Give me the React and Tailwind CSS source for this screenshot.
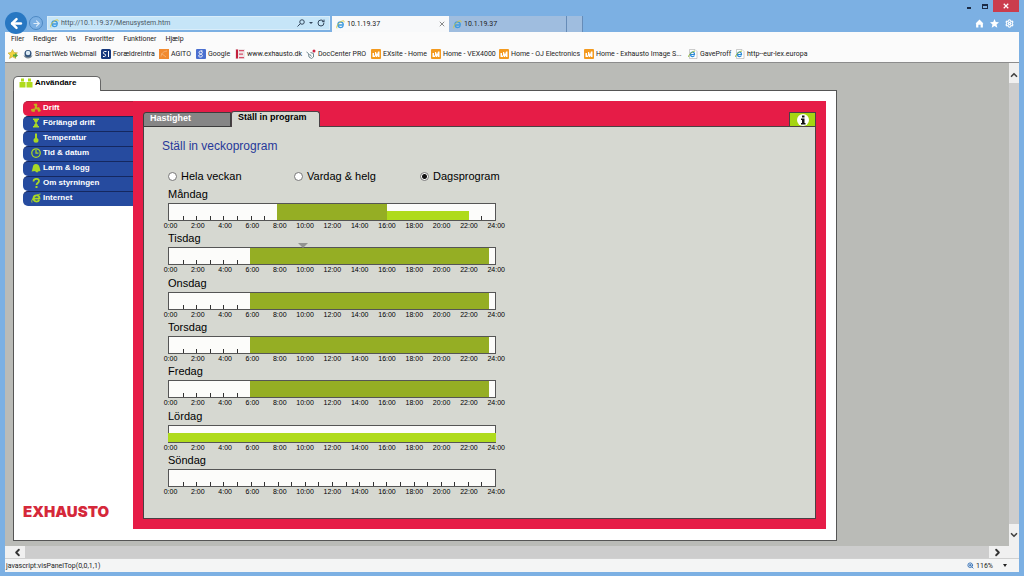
import { useState } from 'react'
import { ArrowLeft, ArrowRight, ChevronDown, ChevronLeft, ChevronRight, ChevronUp, RotateCw, Settings, ZoomIn } from 'lucide-react'

const MENUS = ['Filer', 'Rediger', 'Vis', 'Favoritter', 'Funktioner', 'Hjælp']

const BOOKMARKS = [
  { label: 'SmartWeb Webmail', icon: 'ball', width: 'w-[78px]' },
  { label: 'ForældreIntra', icon: 'si', width: 'w-[58px]' },
  { label: 'AGITO', icon: 'agito', width: 'w-[37px]' },
  { label: 'Google', icon: 'google', width: 'w-[39px]' },
  { label: 'www.exhausto.dk', icon: 'exhausto', width: 'w-[71px]' },
  { label: 'DocCenter PRO', icon: 'doc', width: 'w-[65px]' },
  { label: 'EXsite - Home', icon: 'site', width: 'w-[60px]' },
  { label: 'Home - VEX4000', icon: 'site', width: 'w-[68px]' },
  { label: 'Home - OJ Electronics', icon: 'site', width: 'w-[85px]' },
  { label: 'Home - Exhausto Image S...', icon: 'site', width: 'w-[104px]' },
  { label: 'GaveProff', icon: 'ie', width: 'w-[47px]' },
  { label: 'http--eur-lex.europa', icon: 'ie', width: 'w-[80px]' },
]

const SECTIONS = [
  { label: 'Drift', icon: 'fan' },
  { label: 'Förlängd drift', icon: 'hourglass' },
  { label: 'Temperatur', icon: 'thermo' },
  { label: 'Tid & datum', icon: 'clock' },
  { label: 'Larm & logg', icon: 'bell' },
  { label: 'Om styrningen', icon: 'help' },
  { label: 'Internet', icon: 'globe' },
]

const MODES = ['Hela veckan', 'Vardag & helg', 'Dagsprogram']

const DAYS = [
  { name: 'Måndag', blocks: [{ from: 8, to: 16, level: 'high' }, { from: 16, to: 22, level: 'low' }] },
  { name: 'Tisdag', blocks: [{ from: 6, to: 23.5, level: 'high' }], now: 9.9 },
  { name: 'Onsdag', blocks: [{ from: 6, to: 23.5, level: 'high' }] },
  { name: 'Torsdag', blocks: [{ from: 6, to: 23.5, level: 'high' }] },
  { name: 'Fredag', blocks: [{ from: 6, to: 23.5, level: 'high' }] },
  { name: 'Lördag', blocks: [{ from: 0, to: 24, level: 'low' }] },
  { name: 'Söndag', blocks: [] },
]

const LEVELS = {
  high: 'h-full bg-[#95ae24]',
  low: 'h-[9px] bg-[#afdb1c]',
}

const HOURS = Array.from({ length: 13 }, (_, i) => i * 2)
const pct = hour => `${(hour / 24) * 100}%`

function IeLogo({ className }) {
  return (
    <svg viewBox="0 0 20 20" className={className} aria-hidden="true">
      <path d="M4.6 11h11.6c.2-4-2.4-6.6-6-6.6s-6 2.600-6 6.200 2.600 6.200 6 6.200c2.600 0 4.700-1.300 5.600-3.600" fill="none" stroke="#3f9be0" strokeWidth="3" />
      <path d="M2 18.500C-.5 15 6 5.500 13 2.500c3-1.200 6-1 5 2.500" fill="none" stroke="#d9c93a" strokeWidth="2" />
    </svg>
  )
}

function BookmarkIcon({ name }) {
  if (name === 'ie') {
    return (
      <svg viewBox="0 0 20 20" className="size-[10px] shrink-0" aria-hidden="true">
        <path d="M3 1h11l4 4v14H3z" fill="#fff" stroke="#9a9a9a" />
        <path d="M5 11h8c0-3-1.600-5-4-5s-4 2-4 4.700 1.600 4.600 4 4.600c2 0 3.200-.8 4-2.300" fill="none" stroke="#2d8bd8" strokeWidth="2.400" />
        <path d="M1 16C1 12 7 5 14 4" fill="none" stroke="#8ab52e" strokeWidth="1.800" />
      </svg>
    )
  }
  return (
    <svg viewBox="0 0 20 20" className="size-[10px] shrink-0" aria-hidden="true">
      {name === 'ball' && (
        <>
          <path d="M1 12c3 3 14 3 18 0-1 5-5 7-9 7s-8-3-9-7z" fill="#7b8894" />
          <circle cx="10" cy="9" r="7" fill="#2d4f78" />
          <circle cx="10" cy="8" r="4.500" fill="#dbeaf5" />
        </>
      )}
      {name === 'si' && (
        <>
          <rect width="20" height="20" rx="3" fill="#17387c" />
          <path d="M11 5H7c-3 0-3 5 0 5s3 5 0 5H4M15 4v12" fill="none" stroke="#fff" strokeWidth="2" />
        </>
      )}
      {name === 'agito' && (
        <>
          <rect width="20" height="20" fill="#f18a2f" />
          <path d="M4 15c1-8 6-10 12-11M5 9l9 7" fill="none" stroke="#f7b071" strokeWidth="2" />
        </>
      )}
      {name === 'google' && (
        <>
          <rect width="20" height="20" rx="2" fill="#4a6fd0" />
          <path d="M13 4H9C5 4 5 10 9 10s5-5 1-6M9 10c5 1 5 6 0 6s-5-4 0-5" fill="none" stroke="#fff" strokeWidth="2" />
        </>
      )}
      {name === 'exhausto' && (
        <>
          <rect width="20" height="20" fill="#efe6e8" />
          <path d="M2 1h4v18H2z" fill="#c3203c" />
          <path d="M8 3h10M8 10h8M8 17h10" stroke="#d8506a" strokeWidth="2.500" />
        </>
      )}
      {name === 'doc' && (
        <>
          <path d="M1 6l4 3 1 7 5 3 4-3V9L9 7M7 10l4 5" fill="none" stroke="#71878f" strokeWidth="2" />
          <circle cx="16" cy="4" r="3" fill="#cf2444" />
        </>
      )}
      {name === 'site' && (
        <>
          <rect width="20" height="20" rx="2" fill="#f39a1f" />
          <path d="M3 16V8h3v5h2V6h2l2 5 2-6h3v11h-3v-3l-2 3h-2l-2-3v3z" fill="#fff" />
        </>
      )}
    </svg>
  )
}

function SectionIcon({ name }) {
  return (
    <svg viewBox="0 0 20 20" className="size-[10px] shrink-0 text-[#a9d824]" fill="currentColor" aria-hidden="true">
      {name === 'fan' && (
        <g fill="#c3b41c">
          <path d="M9 9L5 2l6-1 2 3-2 5zM11 10l5-2 4 8-5 2zM9 11l-2 7-6-1-1-5z" />
          <circle cx="10" cy="10" r="3" />
        </g>
      )}
      {name === 'hourglass' && <path d="M4 1h12v3h-2c0 3-2 4-3 6 1 2 3 3 3 6h2v3H4v-3h2c0-3 2-4 3-6-1-2-3-3-3-6H4z" />}
      {name === 'thermo' && <path d="M8 1h4v9c2 1 3 2.500 3 4.500a5 5 0 0 1-10 0C5 12.500 6 11 8 10z" />}
      {name === 'clock' && (
        <g fill="none" stroke="currentColor" strokeWidth="2.500">
          <circle cx="10" cy="10" r="8.500" />
          <path d="M10 4v6h5" />
        </g>
      )}
      {name === 'bell' && <path d="M5 4c4-4 11-2 12 4l2 8-5 1-1 2-4-1v-2l-8 1c2-3 2-9 4-13z" />}
      {name === 'help' && (
        <>
          <path d="M5 7c0-7 11-7 11-1 0 4-5 4-5 8" fill="none" stroke="currentColor" strokeWidth="3.500" />
          <rect x="9" y="16" width="4" height="4" />
        </>
      )}
      {name === 'globe' && (
        <>
          <path d="M5 11h12c0-4-2-6.500-6-6.500s-6 2.500-6 6 2.500 6.500 6 6.500c3 0 4.500-1 5.500-3" fill="none" stroke="currentColor" strokeWidth="3.500" />
          <path d="M2 19C-1 14 9 3 19 2" fill="none" stroke="currentColor" strokeWidth="2" />
        </>
      )}
    </svg>
  )
}

function WindowBar() {
  return (
    <div className="flex h-[14px] shrink-0 justify-end text-[#1c2b45]">
      <button type="button" aria-label="Minimer" className="flex h-3 w-4 items-center justify-center">
        <span className="mt-1 h-[2px] w-1 bg-current" />
      </button>
      <button type="button" aria-label="Maksimer" className="flex h-3 w-4 items-center justify-center">
        <span className="h-[5px] w-[6px] border border-t-2 border-current" />
      </button>
      <button type="button" aria-label="Luk" className="flex h-3 w-[26px] items-center justify-center bg-[#cb3d4d]">
        <svg viewBox="0 0 8 8" className="size-[6px]" stroke="#fff" strokeWidth="1.600"><path d="M1 1l6 6M7 1L1 7" /></svg>
      </button>
    </div>
  )
}

function NavBar() {
  return (
    <div className="flex h-[18px] shrink-0">
      <button type="button" aria-label="Tilbage" className="relative z-10 -mt-[2px] flex size-[22px] shrink-0 items-center justify-center rounded-full bg-[#2877c2] text-white">
        <ArrowLeft size={15} strokeWidth={4} />
      </button>
      <button type="button" aria-label="Frem" className="mt-[2px] ml-[2px] flex size-[14px] shrink-0 items-center justify-center rounded-full border border-[#4d89c4] text-[#dcecfa]">
        <ArrowRight size={9} strokeWidth={3} />
      </button>
      <div className="mt-[2px] ml-1 flex h-[14px] w-[283px] items-center border border-[#d9edfa] bg-[#c6e5f8] pr-1 pl-[2px] text-[#34475c]">
        <IeLogo className="size-[9px] shrink-0" />
        <input
          aria-label="Adresse"
          defaultValue="http://10.1.19.37/Menusystem.htm"
          className="ml-[2px] min-w-0 flex-1 bg-transparent text-[7px] text-[#4a5763] outline-none"
        />
        <svg viewBox="0 0 16 16" className="size-2" fill="none" stroke="currentColor" strokeWidth="2" aria-hidden="true">
          <circle cx="10" cy="6" r="4.500" />
          <path d="M7 9l-6 6" />
        </svg>
        <span className="mx-1 border-x-2 border-t-2 border-x-transparent border-t-current" />
        <RotateCw size={8} strokeWidth={3} />
      </div>
      <div className="ml-[2px] flex pt-[2px]">
        <button type="button" className="flex w-[117px] items-center bg-[#f8f9fa] px-1 text-[7px]">
          <IeLogo className="size-[9px]" />
          <span className="ml-[2px] flex-1 text-left">10.1.19.37</span>
          <svg viewBox="0 0 8 8" className="size-[6px]" stroke="#666" strokeWidth="1"><path d="M1 1l6 6M7 1L1 7" /></svg>
        </button>
        <button type="button" className="flex w-[118px] items-center border-r border-[#668cb8] bg-[#9fbddf] px-1 text-[7px]">
          <IeLogo className="size-[9px]" />
          <span className="ml-[2px]">10.1.19.37</span>
        </button>
        <button type="button" aria-label="Ny fane" className="w-4 border-r border-[#668cb8] bg-[#9fbddf]" />
      </div>
      <div className="mr-[5px] ml-auto flex items-center gap-[6px] text-white">
        <svg viewBox="0 0 16 16" className="size-[9px]" fill="currentColor"><path d="M8 1l7 7h-1v7h-4v-5H6v5H2V8H1z" /></svg>
        <svg viewBox="0 0 16 16" className="size-[9px]" fill="currentColor"><path d="M8 0l2.300 5.500 5.700.4-4.400 3.800L13 15.500 8 12.300 3 15.500l1.400-5.800L0 5.900l5.700-.4z" /></svg>
        <Settings size={9} strokeWidth={3} />
      </div>
    </div>
  )
}

function BookmarkBar() {
  return (
    <div className="h-[31px] shrink-0 border-b border-[#8c8c8c] bg-[#fbfbfb]">
      <div className="flex h-[14px] items-center gap-[9px] pl-[6px]">
        {MENUS.map(menu => <button key={menu} type="button">{menu}</button>)}
      </div>
      <nav className="flex h-4 items-center pl-[3px]">
        <svg viewBox="0 0 20 20" className="mr-[5px] size-[10px] shrink-0" aria-hidden="true">
          <path d="M9 1l3 6 7 .5-5 5 1.500 6.500L9 15.500 3 19l1.500-6.500L0 8l6-1z" fill="#f2d440" stroke="#b99a21" />
          <path d="M10 11h4V8l6 5-6 5v-3h-4z" fill="#5ba83a" />
        </svg>
        {BOOKMARKS.map(({ label, icon, width }) => (
          <a key={label} href="#" className={`flex shrink-0 items-center gap-[2px] whitespace-nowrap ${width}`}>
            <BookmarkIcon name={icon} />
            {label}
          </a>
        ))}
      </nav>
    </div>
  )
}

function DayRow({ name, blocks, now }) {
  return (
    <div>
      <h3 className="h-[17px] text-[11px] leading-[16px]">{name}</h3>
      <div className="relative h-[18px] border border-[#555] bg-[#fcfcfa]">
        {HOURS.slice(0, 12).map(hour => (
          <span key={hour}>
            {hour > 0 && <i className="absolute bottom-0 h-1 w-px bg-[#333]" style={{ left: pct(hour) }} />}
            <i className="absolute bottom-0 h-1 w-px bg-[#333]" style={{ left: pct(hour + 1) }} />
          </span>
        ))}
        {/* Programmed ventilation periods */}
        <div className="absolute inset-y-0 -inset-x-px">
          {blocks.map(block => (
            <div
              key={block.from}
              className={`absolute bottom-0 ${LEVELS[block.level]}`}
              style={{ left: pct(block.from), width: pct(block.to - block.from) }}
            />
          ))}
        </div>
        {now && (
          <span
            className="absolute bottom-full -ml-[5px] border-x-[5px] border-t-[5px] border-x-transparent border-t-[#929390]"
            style={{ left: pct(now) }}
          />
        )}
      </div>
      <div className="-mr-[9px] -ml-[18px] grid h-[9px] grid-cols-13 text-right text-[7px] leading-[9px]">
        {HOURS.map(hour => <span key={hour}>{hour}:00</span>)}
      </div>
    </div>
  )
}

function WeekProgram() {
  const [mode, setMode] = useState('Dagsprogram')

  return (
    <div className="flex flex-1 flex-col border border-[#4a4044] bg-[#d6d8d1] pt-[11px] pb-[22px] pl-[18px]">
      <h2 className="text-[12px] leading-4 text-[#27399a]">Ställ in veckoprogram</h2>
      <div className="mt-[14px] ml-[6px] flex h-4">
        {MODES.map(item => (
          <label key={item} className="flex w-[126px] items-center gap-1 text-[11px] leading-4 whitespace-nowrap">
            <input
              type="radio"
              name="mode"
              checked={mode === item}
              onChange={() => setMode(item)}
              className="size-[9px] appearance-none rounded-full border border-[#777] bg-white checked:bg-[radial-gradient(circle,#111_2px,#fff_3px)]"
            />
            {item}
          </label>
        ))}
      </div>
      <div className="mt-[2px] ml-[6px] flex w-[328px] flex-1 flex-col justify-between">
        {DAYS.map(day => <DayRow key={day.name} {...day} />)}
      </div>
    </div>
  )
}

function ControlPanel() {
  const [section, setSection] = useState('Drift')

  return (
    <main className="flex min-w-0 flex-1 flex-col bg-[#babbb7] pt-[13px] pr-2 pb-[5px] pl-2 font-['Liberation_Sans',Arial,sans-serif] text-black">
      <button type="button" className="relative z-10 -mb-px flex h-[15px] w-[88px] items-center gap-[2px] rounded-t-[5px] border border-b-0 border-[#666] bg-white pb-[3px] pl-[5px] text-[8px] font-bold">
        <svg viewBox="0 0 28 20" className="h-[10px] w-[14px]" fill="#afdb1c" aria-hidden="true">
          <path d="M4 1h6v6H4zM1 8h12v11H1zM18 1h6v6h-6zM15 8h12v11H15z" />
        </svg>
        Användare
      </button>
      <div className="flex w-full max-w-[824px] flex-1 border border-[#555] bg-white pt-[10px] pr-[10px] pb-[11px] pl-[9px]">
        <aside className="flex w-[110px] shrink-0 flex-col justify-between">
          <nav>
            {SECTIONS.map(({ label, icon }) => (
              <button
                key={label}
                type="button"
                onClick={() => setSection(label)}
                className={`flex h-[15px] w-full items-center gap-[2px] rounded-l-[5px] border-t pb-[3px] pl-[8px] text-[8px] font-bold text-white ${
                  section === label ? 'border-[#b31c3c] bg-[#e61c47]' : 'border-[#15285f] bg-[#264b9f]'
                }`}
              >
                <SectionIcon name={icon} />
                {label}
              </button>
            ))}
          </nav>
          <p className="pb-2 font-[Inter,sans-serif] text-[15px] leading-[18px] font-black text-[#d5283a]">EXHAUSTO</p>
        </aside>
        <section className="flex min-w-0 flex-1 flex-col bg-[#e61c47] pt-[10px] pr-[10px] pb-[10px] pl-[10px]">
          <div className="relative -mb-px flex h-4 shrink-0 items-end text-[9px] leading-[11px] font-bold">
            <button type="button" className="h-[15px] w-[88px] rounded-tl-[3px] border border-[#3d3d3d] bg-[#868686] pb-[3px] pl-[6px] text-left leading-[11px] text-white">Hastighet</button>
            <button type="button" className="h-4 w-[89px] rounded-t-[3px] border border-b-0 border-[#4a4044] bg-[#d6d8d1] pb-1 pl-[6px] text-left leading-[11px]">Ställ in program</button>
            <button type="button" aria-label="Information" className="ml-auto flex h-[15px] w-[27px] items-center justify-center border border-[#4a4044] bg-[#a5d512]">
              <svg viewBox="0 0 24 24" className="size-3" aria-hidden="true">
                <circle cx="12" cy="12" r="12" fill="#fff" />
                <path d="M10 3h5v4h-5zM8 9h7v9h2v3H8v-3h2v-6H8z" fill="#111" />
              </svg>
            </button>
          </div>
          <WeekProgram />
        </section>
      </div>
    </main>
  )
}

export default function App() {
  return (
    <div className="flex h-screen flex-col overflow-hidden bg-[#7cb0e3] px-[5px] pb-1 font-[Roboto,sans-serif] text-[7px] leading-[10px] text-[#222]">
      <WindowBar />
      <NavBar />
      <BookmarkBar />
      <div className="flex min-h-0 flex-1">
        <ControlPanel />
        <div className="flex w-[10px] shrink-0 flex-col bg-[#cdcdcd] text-[#444]">
          <button type="button" aria-label="Rul op" className="flex h-5 items-center justify-center bg-[#f0f0f0] pt-1"><ChevronUp size={10} strokeWidth={4} /></button>
          <button type="button" aria-label="Rul ned" className="mt-auto flex h-[22px] items-center justify-center bg-[#f0f0f0]"><ChevronDown size={10} strokeWidth={4} /></button>
        </div>
      </div>
      <div className="flex h-3 shrink-0 bg-[#f0f0f0] pr-[10px] text-[#333]">
        <div className="flex flex-1 justify-between bg-[#cdcdcd]">
          <button type="button" aria-label="Rul til venstre" className="flex w-5 items-center justify-center bg-[#f0f0f0] pl-1"><ChevronLeft size={11} strokeWidth={4} /></button>
          <button type="button" aria-label="Rul til højre" className="flex w-5 items-center justify-center bg-[#f0f0f0] pr-1"><ChevronRight size={11} strokeWidth={4} /></button>
        </div>
      </div>
      <footer className="flex h-[14px] shrink-0 items-center justify-between border-t border-[#d0d0d0] bg-[#f4f5f5] pl-px">
        <span>javascript:visPanelTop(0,0,1,1)</span>
        <button type="button" className="flex items-center gap-[2px] pr-3">
          <ZoomIn size={7} strokeWidth={3} className="text-[#2b6cb5]" />
          116%
          <span className="ml-2 border-x-2 border-t-[3px] border-x-transparent border-t-[#222]" />
        </button>
      </footer>
    </div>
  )
}
